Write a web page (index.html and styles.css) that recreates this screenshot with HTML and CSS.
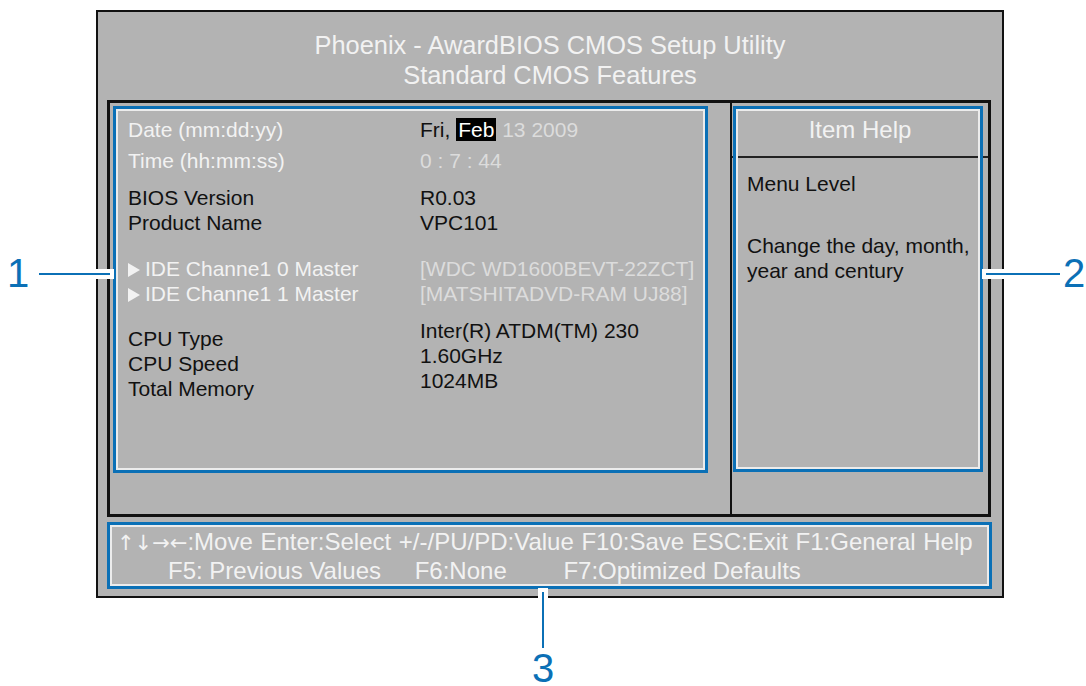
FILE: index.html
```html
<!DOCTYPE html>
<html lang="en">
<head>
    <meta charset="UTF-8">
    <meta name="viewport" content="width=device-width, initial-scale=1.0">
    <title>Standard CMOS Features</title>
    <link rel="stylesheet" href="styles.css">
</head>
<body>
    <div class="figura">

        <div class="bios">
            <div class="titulo">
                <div>Phoenix - AwardBIOS CMOS Setup Utility</div>
                <div>Standard CMOS Features</div>
            </div>

            <div class="quadro">
                <div class="coluna-esq">
                    <div class="grupo grupo-data">
                        <div class="rotulos">
                            <div class="claro">Date (mm:dd:yy)</div>
                            <div class="claro">Time (hh:mm:ss)</div>
                        </div>
                        <div class="valores">
                            <div>Fri, <span class="sel">Feb</span> <span class="fraco">13 2009</span></div>
                            <div class="fraco">0 : 7 : 44</div>
                        </div>
                    </div>

                    <div class="grupo grupo-bios">
                        <div class="rotulos">
                            <div>BIOS Version</div>
                            <div>Product Name</div>
                        </div>
                        <div class="valores">
                            <div>R0.03</div>
                            <div>VPC101</div>
                        </div>
                    </div>

                    <div class="grupo grupo-ide">
                        <div class="rotulos claro">
                            <div><span class="seta"></span>IDE Channe1 0 Master</div>
                            <div><span class="seta"></span>IDE Channe1 1 Master</div>
                        </div>
                        <div class="valores fraco">
                            <div>[WDC WD1600BEVT-22ZCT]</div>
                            <div>[MATSHITADVD-RAM UJ88]</div>
                        </div>
                    </div>

                    <div class="grupo grupo-cpu">
                        <div class="rotulos">
                            <div>CPU Type</div>
                            <div>CPU Speed</div>
                            <div>Total Memory</div>
                        </div>
                        <div class="valores">
                            <div>Inter(R) ATDM(TM) 230</div>
                            <div>1.60GHz</div>
                            <div>1024MB</div>
                        </div>
                    </div>
                </div>

                <div class="coluna-dir">
                    <div class="ajuda-topo">Item Help</div>
                    <div class="ajuda-texto">
                        <p>Menu Level</p>
                        <p class="espaco">Change the day, month,<br>year and century</p>
                    </div>
                </div>
            </div>

            <div class="teclas">
                <div class="linha1"><span class="setas">↑↓→←</span>:Move Enter:Select +/-/PU/PD:Value F10:Save ESC:Exit F1:General Help</div>
                <div class="linha2">
                    <span>F5: Previous Values</span>
                    <span class="f6">F6:None</span>
                    <span class="f7">F7:Optimized Defaults</span>
                </div>
            </div>
        </div>

        <!-- marcacoes azuis por cima da tela -->
        <div class="caixa caixa-esq"></div>
        <div class="caixa caixa-dir"></div>
        <div class="caixa caixa-baixo"></div>

        <div class="traco traco-1"></div>
        <div class="traco traco-2"></div>
        <div class="traco traco-3"></div>

        <div class="numero num-1">1</div>
        <div class="numero num-2">2</div>
        <div class="numero num-3">3</div>
    </div>
</body>
</html>
```

FILE: styles.css
```css
* {
    margin: 0;
    padding: 0;
    box-sizing: border-box;
    font-family: "Liberation Sans", Arial, sans-serif;
}

:root {
    --cinza: #b3b3b3;
    --azul: #0b70b6;
    --claro: #f2f2f2;
    --fraco: #dcdcdc;
    --preto: #111111;
}

html {
    overflow: hidden;
}

body {
    background: #ffffff;
    color: var(--preto);
}

.figura {
    position: relative;
    width: 1086px;
    height: 686px;
    padding-top: 10px;
    padding-left: 96px;
}

.bios {
    width: 908px;
    height: 588px;
    background: var(--cinza);
    border: 2px solid var(--preto);
}

.titulo {
    height: 88px;
    padding-top: 18px;
    text-align: center;
    color: var(--claro);
    font-size: 25.4px;
    line-height: 30px;
}

.quadro {
    display: flex;
    width: 884px;
    height: 417px;
    margin-left: 9px;
    border: 3px solid var(--preto);
    font-size: 21px;
    line-height: 25px;
}

.coluna-esq {
    width: 622px;
    padding: 11px 0 0 18px;
    border-right: 2px solid var(--preto);
}

.grupo {
    display: flex;
    align-items: flex-start;
}

.rotulos {
    width: 292px;
}

.grupo-data {
    line-height: 31px;
}

.grupo-bios {
    margin-top: 9px;
}

.grupo-ide {
    margin-top: 21px;
}

.grupo-cpu {
    margin-top: 12px;
}

.grupo-cpu .rotulos {
    padding-top: 8px;
}

.claro {
    color: var(--claro);
}

.fraco {
    color: var(--fraco);
}

.sel {
    background: #000;
    color: #fff;
    padding: 0 2px;
}

.seta {
    display: inline-block;
    width: 0;
    height: 0;
    border-left: 12px solid var(--claro);
    border-top: 7px solid transparent;
    border-bottom: 7px solid transparent;
    margin-right: 5px;
    vertical-align: -1px;
}

.coluna-dir {
    width: 256px;
}

.ajuda-topo {
    height: 55px;
    line-height: 53px;
    text-align: center;
    color: var(--claro);
    font-size: 24px;
    border-bottom: 2px solid #222;
}

.ajuda-texto {
    padding: 13px 0 0 15px;
}

.espaco {
    margin-top: 37px;
}

.teclas {
    padding-top: 11px;
    color: var(--claro);
    font-size: 24px;
    line-height: 28px;
}

.linha1 {
    padding-left: 19px;
    white-space: nowrap;
    word-spacing: 1px;
}

.setas {
    font-family: "DejaVu Sans", sans-serif;
    font-size: 21px;
}

.linha2 {
    padding-left: 70px;
}

.f6 {
    margin-left: 27px;
}

.f7 {
    margin-left: 50px;
}

/* marcacoes */

.caixa {
    position: absolute;
    border: 3px solid var(--azul);
    box-shadow: inset 0 0 0 2px #ececec;
}

.caixa-esq {
    left: 113px;
    top: 106px;
    width: 595px;
    height: 367px;
}

.caixa-dir {
    left: 733px;
    top: 106px;
    width: 250px;
    height: 366px;
}

.caixa-baixo {
    left: 107px;
    top: 522px;
    width: 885px;
    height: 67px;
}

.traco {
    position: absolute;
    background: var(--azul);
    box-shadow: 0 0 0 4px #ffffff;
}

.traco-1 {
    left: 39px;
    top: 273px;
    width: 71px;
    height: 2px;
}

.traco-2 {
    left: 986px;
    top: 273px;
    width: 74px;
    height: 2px;
}

.traco-3 {
    left: 542px;
    top: 592px;
    width: 2px;
    height: 56px;
}

.numero {
    position: absolute;
    color: var(--azul);
    font-size: 40px;
    line-height: 30px;
}

.num-1 {
    left: 7px;
    top: 258px;
}

.num-2 {
    left: 1063px;
    top: 258px;
}

.num-3 {
    left: 532px;
    top: 653px;
}
```
